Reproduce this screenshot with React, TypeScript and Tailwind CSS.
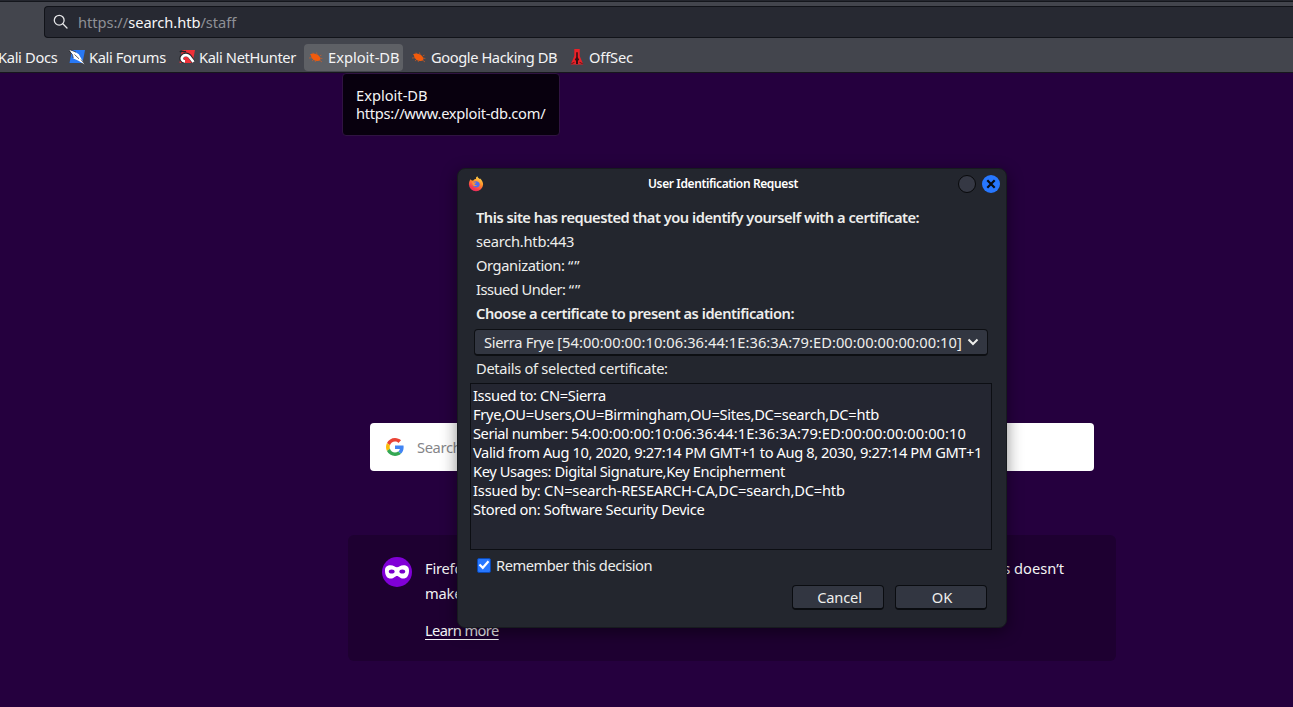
import React from "react";

const BugIcon = () => (
  <svg className="h-4 w-4 shrink-0" viewBox="0 0 16 16" fill="none">
    <path d="M2 5.2C4 4 7 4.3 9 5.6c1.8 1 3.2 2.5 3.4 4.2.1 1.4-1 2.2-2.8 2.2-2.8 0-5-1.4-6-3.4C3 7.4 3.2 6 2 5.2Z" fill="#f35b0b" />
    <path d="M1 9l3-.2M4 12l2-1.8M8.5 3.5l.6 2.2M5 3.6l.4 1.3M12 6.600l1.500-.4M12 9l2.400.6M11.500 11l2.500 2M7 11.500l.5 1.500" stroke="#e45c1a" strokeWidth=".6" />
  </svg>
);

const ForumsIcon = () => (
  <svg className="h-4 w-4 shrink-0" viewBox="0 0 16 16">
    <path d="M3 1h13l-2.500 13H.5Z" fill="#2878f5" />
    <path d="M.5 1L5.500 2.500l4.300 2.700 2.400 4.300L15.800 15.500l-6.300-3.800-5-2.200L3 5Z" fill="#fff" />
    <path d="M0 2L3.500 5.500l.7 3.500M1.500 .8l5.500 2.400M5.500 5.500l4.500 4.300M12 10.500l4 5" stroke="#26272b" strokeWidth=".7" fill="none" />
  </svg>
);

const HunterIcon = () => (
  <svg className="h-4 w-4 shrink-0" viewBox="0 0 16 16">
    <path d="M3 1h13l-2.500 13H.5Z" fill="#ef3038" />
    <path d="M.8 3C3 1 5 3.500 7 2.500" stroke="#222429" strokeWidth="1.600" fill="none" />
    <path d="M5.500 12.500C2.500 12.300 1.500 9.500 3 7.500c1.700-2.200 5.200-2.600 7.400-.6l4.100 6.100" stroke="#26272b" strokeWidth="4" fill="none" />
    <path d="M6 12.300C2.900 12.300 2 9.500 3.400 7.800c1.700-2 4.900-2.200 6.800-.4l4.300 5.600" stroke="#fff" strokeWidth="2.700" fill="none" />
  </svg>
);

const OffSecIcon = () => (
  <svg className="h-4 w-4 shrink-0" viewBox="0 0 16 16">
    <path d="M5.300 0h5.400v7l3.600 8.500H1.700L5.300 7Z" fill="#ed2027" />
    <path d="M7.200 3.200h1.600v5l1.400 2.600-1.200 1v3.300H7v-3.300l-1.200-1 1.400-2.600Z" fill="#351014" />
    <path d="M2.200 14.800l3.300-1.500M13.800 14.800l-3.300-1.500" stroke="#621419" />
  </svg>
);

const GoogleIcon = () => (
  <svg className="h-[18px] w-[18px] shrink-0" viewBox="0 0 48 48">
    <path fill="#EA4335" d="M24 9.5c3.54 0 6.71 1.22 9.21 3.6l6.85-6.85C35.9 2.38 30.47 0 24 0 14.62 0 6.51 5.38 2.56 13.22l7.98 6.19C12.43 13.72 17.74 9.5 24 9.5z" />
    <path fill="#4285F4" d="M46.98 24.55c0-1.57-.15-3.09-.38-4.55H24v9.02h12.94c-.58 2.96-2.26 5.48-4.78 7.18l7.73 6c4.51-4.18 7.09-10.36 7.09-17.65z" />
    <path fill="#FBBC05" d="M10.53 28.59c-.48-1.45-.76-2.99-.76-4.59s.27-3.14.76-4.59l-7.98-6.19C.92 16.46 0 20.12 0 24s.92 7.54 2.56 10.78l7.97-6.19z" />
    <path fill="#34A853" d="M24 48c6.48 0 11.93-2.13 15.89-5.81l-7.73-6c-2.15 1.45-4.92 2.3-8.16 2.3-6.26 0-11.57-4.22-13.47-9.91l-7.98 6.19C6.51 42.62 14.62 48 24 48z" />
  </svg>
);

const MaskIcon = () => (
  <svg className="h-[30px] w-[30px] shrink-0" viewBox="0 0 30 30">
    <circle cx="15" cy="15" r="15" fill="#8000d7" />
    <path d="M3 13.500C3 9.600 5.200 8.200 8.500 8.200c3.200 0 4.700 2 6.500 2s3.300-2 6.500-2c3.300 0 5.500 1.400 5.500 5.300 0 5.200-2.200 8.100-5.800 8.100-3.200 0-4.300-2.700-6.200-2.700s-3 2.700-6.200 2.700C5.200 21.600 3 18.700 3 13.500Z" fill="#fff" />
    <ellipse cx="9.700" cy="14.600" rx="2.900" ry="2" fill="#7700cc" />
    <ellipse cx="20.300" cy="14.600" rx="2.900" ry="2" fill="#7700cc" />
  </svg>
);

const FirefoxIcon = () => (
  <svg className="h-4 w-4 shrink-0" viewBox="0 0 16 16">
    <defs>
      <linearGradient id="fox" x1=".8" y1="0" x2=".3" y2="1">
        <stop offset="0" stopColor="#ffe24b" />
        <stop offset=".45" stopColor="#ff8b2b" />
        <stop offset=".8" stopColor="#f8384d" />
        <stop offset="1" stopColor="#e32a68" />
      </linearGradient>
    </defs>
    <path d="M2.500 3.200l1.300 1.300 1.500-.1C6 3.300 7.500 3 8 3c-.3-1.200.5-2.300 1.400-2.700.1 1.300 1.200 1.800 2.200 2.800l.5-.5c1.800 1.500 3 3.500 3 6A7.100 7.100 0 0 1 8 15.300 7.100 7.100 0 0 1 .9 8.500c0-2 .5-3.900 1.600-5.300Z" fill="url(#fox)" />
    <path d="M5.200 6l3-.7c2 .1 3.500 1.500 3.500 3.200 0 1.800-1.500 3-3.500 3S4.800 10.200 4.700 8.500Z" fill="#4b6df0" />
    <path d="M4.200 5.400L6 6.500l2.300.1c-.2 1-1.500 1-1.800 1.700.3 1 1.200 1 2.500.8-1 1.600-3.700 1.600-4.500-.5Z" fill="#ff9333" />
  </svg>
);

export default function App() {
  return (
    <div className="relative flex h-[707px] w-[1293px] flex-col overflow-hidden bg-[#25003e] font-['Noto_Sans',sans-serif] text-[14.67px] text-[#f4f4f5]">
      <header className="flex h-[73px] shrink-0 flex-col border-b border-[#17171d] bg-[#43454d]">
        <div className="h-[2px] shrink-0 border-b border-[#14161c] bg-[#24262e]" />
        <div className="flex h-[40px] shrink-0 pt-1 pl-11">
          <div className="flex h-8 grow items-center rounded-l border border-r-0 border-[#111319] bg-[#272932] pl-2">
            <svg className="h-4 w-4 shrink-0" viewBox="0 0 16 16" fill="none" stroke="#e6e6e8" strokeWidth="1.300">
              <circle cx="6.200" cy="6.200" r="4.900" />
              <path d="M9.800 9.800l4.200 4.200" strokeLinecap="round" />
            </svg>
            <span className="ml-[9px] tracking-[-0.04px] text-[#8e9096]">https://<span className="text-[#f6f6f7]">search.htb</span>/staff</span>
          </div>
        </div>
        <nav className="flex h-[31px] items-center whitespace-nowrap">
          <span className="-ml-[2px] w-[71px] tracking-[-0.33px]">Kali Docs</span>
          <span className="flex w-[110px] items-center gap-1 tracking-[-0.38px]"><ForumsIcon />Kali Forums</span>
          <span className="flex w-[125px] items-center gap-1 tracking-[-0.36px]"><HunterIcon />Kali NetHunter</span>
          <span className="flex h-[27px] w-[99px] items-center gap-1 rounded bg-[#5e6065] pl-1"><BugIcon />Exploit-DB</span>
          <span className="ml-1 flex w-[162px] items-center gap-1 pl-1 tracking-[-0.41px]"><BugIcon />Google Hacking DB</span>
          <span className="flex items-center gap-1 tracking-[-0.15px]"><OffSecIcon />OffSec</span>
        </nav>
      </header>

      <main className="flex grow flex-col pt-[350px]">
        <div className="ml-[370px] flex h-12 w-[724px] items-center gap-[13px] rounded bg-white pl-4 tracking-[-0.35px] text-[#858589]">
          <GoogleIcon />
          <span>Search</span>
        </div>
        <section className="mt-16 ml-[348px] flex h-[126px] w-[768px] gap-[13px] rounded-md bg-[#1e0031] pt-[22px] pl-[34px]">
          <MaskIcon />
          <div className="-mt-px flex w-[639px] flex-col leading-[25px]">
            <div className="flex justify-between"><span className="tracking-[-0.2px]">Firefox</span><span>s doesn’t</span></div>
            <span className="tracking-[-0.2px]">make</span>
            <a className="mt-[12px] self-start tracking-[-0.6px] underline underline-offset-[3px]">Learn more</a>
          </div>
        </section>
      </main>

      <div className="absolute top-[73px] left-[342px] flex h-[63px] w-[218px] flex-col rounded border border-[#301342] bg-[#08000e] pt-[12px] pl-[13px] leading-[18px]">
        <span>Exploit-DB</span>
        <span className="tracking-[-0.27px]">https://www.exploit-db.com/</span>
      </div>

      <div className="absolute top-[168px] left-[457px] flex h-[460px] w-[550px] flex-col rounded-lg border border-[#171b1f] bg-[#23262e] text-[#eeeeec] shadow-[0_4px_16px_rgba(0,0,0,0.45)]">
        <div className="flex h-[30px] shrink-0 items-center pr-[6px] pl-[10px]">
          <FirefoxIcon />
          <h1 className="ml-[14px] grow pr-[10px] text-center text-[12px] font-semibold tracking-[-0.38px] text-white">User Identification Request</h1>
          <div className="flex gap-[6px]">
            <div className="h-[18px] w-[18px] rounded-full border border-[#08090b] bg-[#353844]" />
            <div className="flex h-[18px] w-[18px] items-center justify-center rounded-full bg-[#2777ff]">
              <svg className="h-[10px] w-[10px]" viewBox="0 0 10 10"><path d="M1.300 1.300l7.400 7.400M8.700 1.300L1.300 8.700" stroke="#080b12" strokeWidth="2.200" /></svg>
            </div>
          </div>
        </div>
        <div className="flex flex-col pt-[6px] pl-[18px] leading-6 whitespace-nowrap">
          <b className="font-semibold tracking-[-0.48px]">This site has requested that you identify yourself with a certificate:</b>
          <span className="tracking-[-0.25px]">search.htb:443</span>
          <span className="tracking-[-0.38px]">Organization: <span className="tracking-[1px]">“”</span></span>
          <span className="tracking-[-0.52px]">Issued Under: <span className="tracking-[1px]">“”</span></span>
          <b className="font-semibold tracking-[-0.47px]">Choose a certificate to present as identification:</b>
        </div>
        <div className="mt-[4px] ml-[16px] flex h-[27px] w-[514px] shrink-0 items-center justify-between rounded border border-b-2 border-[#0d0f13] bg-[#323641] pr-2 pl-[9px] whitespace-nowrap">
          <span><span className="tracking-[-0.33px]">Sierra Frye </span><span className="tracking-[0.05px]">[54:00:00:00:10:06:36:44:1E:36:3A:79:ED:00:00:00:00:00:10]</span></span>
          <svg className="h-3 w-3 shrink-0" viewBox="0 0 12 12" fill="none" stroke="#eeeeec" strokeWidth="2"><path d="M1.500 3.500L6 8l4.500-4.500" /></svg>
        </div>
        <span className="mb-[2px] ml-[18px] leading-[25px] tracking-[-0.3px]">Details of selected certificate:</span>
        <div className="ml-[12px] flex h-[167px] w-[522px] shrink-0 flex-col border border-[#0c0e13] bg-[#242631] pt-[2px] pl-[2px] leading-[19px] whitespace-nowrap text-white">
          <span className="tracking-[-0.36px]">Issued to: CN=Sierra</span>
          <span className="tracking-[-0.29px]">Frye,OU=Users,OU=Birmingham,OU=Sites,DC=search,DC=htb</span>
          <span><span className="tracking-[-0.46px]">Serial number: </span><span className="tracking-[0.05px]">54:00:00:00:10:06:36:44:1E:36:3A:79:ED:00:00:00:00:00:10</span></span>
          <span className="tracking-[-0.4px]">Valid from Aug 10, 2020, 9:27:14 PM GMT+1 to Aug 8, 2030, 9:27:14 PM GMT+1</span>
          <span className="tracking-[-0.4px]">Key Usages: Digital Signature,Key Encipherment</span>
          <span className="tracking-[-0.18px]">Issued by: CN=search-RESEARCH-CA,DC=search,DC=htb</span>
          <span className="tracking-[-0.35px]">Stored on: Software Security Device</span>
        </div>
        <div className="mt-[4px] ml-[19px] flex h-[22px] items-center gap-[5px]">
          <span className="flex h-[15px] w-[14px] items-center justify-center rounded-xs border border-[#0b49b4] bg-[#2777ff]">
            <svg className="h-3 w-3 shrink-0" viewBox="0 0 12 12" fill="none" stroke="#fff" strokeWidth="2.200"><path d="M1.500 5.500l3.300 3.300 5.700-6.500" /></svg>
          </span>
          <span className="tracking-[-0.45px]">Remember this decision</span>
        </div>
        <div className="mt-[9px] flex justify-end gap-[3px] pr-[19px] leading-[22px]">
          <button className="mr-2 h-[25px] w-[92px] rounded border border-b-2 border-[#0a0c10] bg-[#323641] pl-[3px] tracking-[-0.2px]">Cancel</button>
          <button className="h-[25px] w-[92px] rounded border border-b-2 border-[#0a0c10] bg-[#323641] pl-[2px]">OK</button>
        </div>
      </div>
    </div>
  );
}
